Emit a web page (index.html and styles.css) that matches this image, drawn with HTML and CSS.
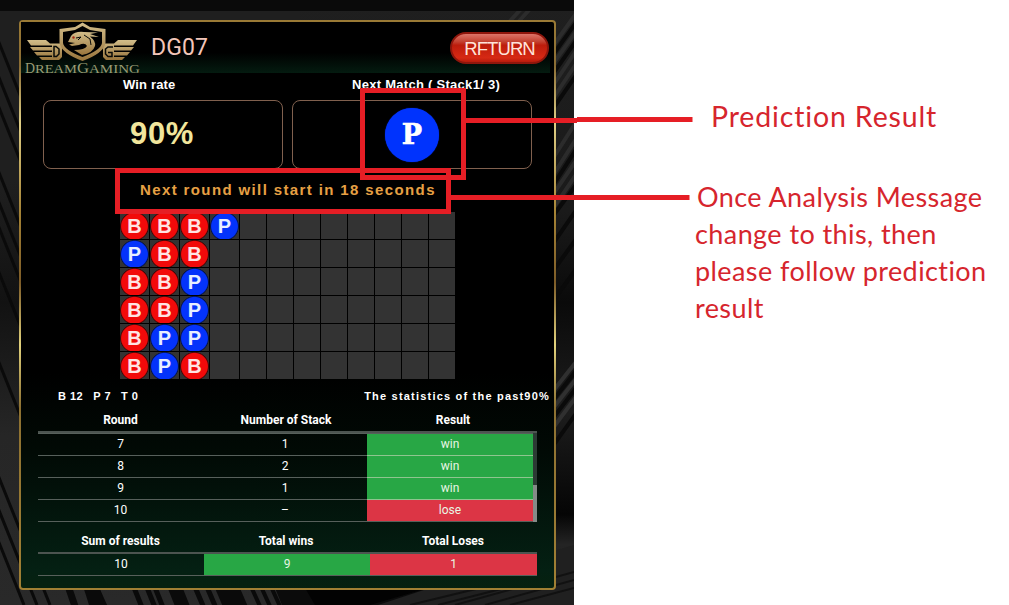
FILE: index.html
```html
<!DOCTYPE html>
<html lang="en">
<head>
<meta charset="utf-8">
<title>DG07</title>
<link rel="stylesheet" href="styles.css">
</head>
<body>
<main class="stage">
  <section class="app">
    <svg class="texture" viewBox="0 0 574 605" aria-hidden="true">
      <defs>
        <linearGradient id="shade" x1="0" y1="0" x2="0" y2="1">
          <stop offset="0" stop-color="#1f1f1f"/><stop offset=".3" stop-color="#1f1f1f"/><stop offset=".5" stop-color="#121212"/><stop offset=".72" stop-color="#262626"/><stop offset="1" stop-color="#292929"/>
        </linearGradient>
        <linearGradient id="shadeR" x1="0" y1="0" x2="0" y2="1">
          <stop offset="0" stop-color="#1f1f1f"/><stop offset=".35" stop-color="#1a1a1a"/><stop offset=".5" stop-color="#0a0a0a"/><stop offset=".68" stop-color="#1d1d1d"/><stop offset=".85" stop-color="#050505"/><stop offset=".9" stop-color="#242424"/><stop offset="1" stop-color="#1e1e1e"/>
        </linearGradient>
      </defs>
      <rect width="300" height="605" fill="url(#shade)"/>
      <rect x="300" width="274" height="605" fill="url(#shadeR)"/>
      <g stroke="#0a0a0a" stroke-width="3" fill="none">
        <path d="M-10 20L30 120M-10 55L30 155M-10 85L30 185M-10 150L30 250M-10 180L30 280"/>
        <path d="M-10 205L30 305M-10 250L30 350M-10 340L30 440M-10 455L50 605M-10 488L37 605M-10 520L24 605"/>
        <path stroke-width="7" d="M66 580L78 615M92 580L110 620"/>
        <path stroke-width="15" d="M89 580L100 615"/>
        <path stroke-width="5" d="M131 580L145 615M144 580L158 615M152 580L166 615"/>
        <path stroke-width="14" d="M172 580L186 615"/>
        <path stroke-width="5" d="M192 580L207 615M204 580L219 615"/>
        <path stroke-width="23" d="M224 580L239 615"/>
        <path stroke-width="4" d="M248 580L264 615M258 580L274 615M268 580L284 615"/>
      </g>
      <path d="M275 588H574V560L372 610H284Z" fill="#0b0b0b"/>
      <path d="M305 588H428L370 605H315Z" fill="#020202"/>
      <path d="M378 605L430 588L574 545V605Z" fill="#202020"/>
      <g stroke="#111" stroke-width="2"><path d="M410 605L480 588M438 605L505 588M455 605L574 572M485 605L574 580M510 605L574 588"/></g>
      <g stroke="#303030" stroke-width="4">
        <path d="M500 32L522 8M509 32L531 8M550 50L590 -6M550 68L590 12M550 90L590 30M550 103L590 43M550 163L590 100M550 180L590 117M550 199L590 140M550 213L590 154" opacity=".8"/>
        <path d="M550 395L590 344M550 412L590 361M550 432L590 378"/>
      </g>
      <g stroke="#0a0a0a" stroke-width="4">
        <path d="M550 59L590 3M550 78L590 21M550 113L590 55M550 190L590 128M550 220L590 166M550 248L590 190M550 275L590 220M550 305L590 250M550 404L590 353M550 422L590 370M550 450L590 394"/>
      </g>
      <rect width="574" height="11" fill="#0a0a0a"/>
    </svg>

    <div class="panel">
      <header class="head">
        <svg class="logo" viewBox="25 22 116 53">
          <defs>
            <linearGradient id="gold" x1="0" y1="0" x2="0" y2="1"><stop offset="0" stop-color="#d2bd8a"/><stop offset="1" stop-color="#99753c"/></linearGradient>
          </defs>
          <g fill="url(#gold)">
            <path d="M27 40H46L50 43.500H62V57L59 60H42L39 57H52V55.500H37L34 52H52V50.500H33L30 47H52V45.500H31Z"/>
            <path d="M137 40H118L114 43.500H103V57L106 60H122L125 57H114V55.500H127L130 52H114V50.500H131L134 47H114V45.500H133Z"/>
            <path fill-rule="evenodd" d="M82.500 22.500L90 27L105.500 29V43Q104 53 82.500 61Q61 53 59.500 43V29L75 27ZM82.500 26L90 30L102 32V43Q101 50 82.500 57Q64 50 63 43V32L75 30Z"/>
            <path d="M68 42L71 36Q75 31 84 32L98 32.500L90 34L99 37L90 36.500Q96 41 95 46Q93 53 82 55L74 50Q85 50 87 46Q85 42 79 45L72 46L69 44.500L75 43Z"/>
          </g>
          <path fill="none" stroke="#090b08" stroke-width="1.500" d="M54 46.500H56L59 49V54L56.500 56.500H54ZM113 47H108L105.500 49V54L108 56.500H112V52.500H108"/>
          <path fill="none" stroke="#090b08" d="M76 38L81 37L78 40M84 35L90 39L91 45"/>
          <circle cx="73.500" cy="37.500" r="1.200" fill="#a32b16"/>
          <g class="wordmark"><text x="25" y="73" font-size="14" textLength="10" lengthAdjust="spacingAndGlyphs">D</text><text x="35" y="73" font-size="11.500" textLength="42" lengthAdjust="spacingAndGlyphs">REAM</text><text x="77" y="73" font-size="14" textLength="12" lengthAdjust="spacingAndGlyphs">G</text><text x="89" y="73" font-size="11.500" textLength="51" lengthAdjust="spacingAndGlyphs">AMING</text></g>
        </svg>
        <h1 class="room">DG07</h1>
        <button class="return">RFTURN</button>
      </header>

      <div class="labels"><span class="lab-rate">Win rate</span><span class="lab-next">Next Match ( Stack1/ 3)</span></div>
      <div class="cards">
        <div class="card rate">90%</div>
        <div class="card"><span class="pick">P</span></div>
      </div>
      <p class="message">Next round will start in 18 seconds</p>

      <div class="road">
        <i class="b">B</i><i class="b">B</i><i class="b">B</i><i class="p">P</i><i></i><i></i><i></i><i></i><i></i><i></i><i></i><i></i>
        <i class="p">P</i><i class="b">B</i><i class="b">B</i><i></i><i></i><i></i><i></i><i></i><i></i><i></i><i></i><i></i>
        <i class="b">B</i><i class="b">B</i><i class="p">P</i><i></i><i></i><i></i><i></i><i></i><i></i><i></i><i></i><i></i>
        <i class="b">B</i><i class="b">B</i><i class="p">P</i><i></i><i></i><i></i><i></i><i></i><i></i><i></i><i></i><i></i>
        <i class="b">B</i><i class="p">P</i><i class="p">P</i><i></i><i></i><i></i><i></i><i></i><i></i><i></i><i></i><i></i>
        <i class="b">B</i><i class="p">P</i><i class="b">B</i><i></i><i></i><i></i><i></i><i></i><i></i><i></i><i></i><i></i>
      </div>

      <div class="stats">
        <div class="counts"><span>B 12</span><span>P 7</span><span>T 0</span></div>
        <span class="past">The statistics of the past90%</span>
      </div>

      <div class="thead"><span>Round</span><span>Number of Stack</span><span>Result</span></div>
      <div class="scroller">
        <div class="rows">
          <div class="row"><span>7</span><span>1</span><span class="win">win</span></div>
          <div class="row"><span>8</span><span>2</span><span class="win">win</span></div>
          <div class="row"><span>9</span><span>1</span><span class="win">win</span></div>
          <div class="row"><span>10</span><span>–</span><span class="lose">lose</span></div>
        </div>
        <div class="track"><div class="thumb"></div></div>
      </div>
      <div class="thead sums"><span>Sum of results</span><span>Total wins</span><span>Total Loses</span></div>
      <div class="row total"><span>10</span><span class="win">9</span><span class="lose">1</span></div>
    </div>
  </section>

  <aside class="notes">
    <p class="note first">Prediction Result</p>
    <p class="note"><span class="l1">Once Analysis Message</span><br><span>change to this, then</span><br><span>please follow prediction</span><br><span>result</span></p>
  </aside>

  <svg class="marks" viewBox="0 0 1009 605" aria-hidden="true">
    <g fill="none" stroke="#e61e25" stroke-width="5">
      <rect x="362.500" y="90.500" width="101" height="87"/>
      <rect x="117.500" y="170.500" width="331" height="41"/>
      <path d="M466 120.500H577M577 119.500H692.500M451 197.500H689.500"/>
    </g>
  </svg>
</main>
</body>
</html>
```
FILE: styles.css
```css
* { box-sizing: border-box; }
body { margin: 0; background: #fff; font-family: "Liberation Sans", Arial, sans-serif; }
.stage { position: relative; display: flex; width: 1009px; height: 605px; overflow: hidden; }
.app { position: relative; flex: none; width: 574px; height: 605px; padding: 20px 18px 15px 19px; background: #141414; }
.texture { position: absolute; inset: 0; width: 574px; height: 605px; }
.panel {
  position: relative; width: 537px; height: 570px; border: 2px solid transparent; border-radius: 4px;
  background:
    linear-gradient(180deg, #000 0, #000 62%, #010a05 76%, #042013 97%, #06210f 100%) padding-box,
    linear-gradient(180deg, #9a7a35 0, #8a6c34 8%, #e0cf86 18%, #a48235 34%, #7d5c28 46%, #e2d27d 57%, #8d7132 68%, #a18034 100%) border-box;
}
.head { display: flex; height: 51px; width: 529px; padding-left: 4px; background: linear-gradient(180deg, #000 60%, #041b10 100%); }
.logo { width: 116px; height: 53px; flex: none; }
.wordmark text { font-family: "Liberation Serif", serif; fill: #9a9b74; }
.room { margin: 12px 0 0 10px; width: 290px; font: 400 23px/28px Roboto, sans-serif; letter-spacing: .1px; color: #f3c6b9; }
.return {
  flex: none; width: 99px; height: 32px; margin: 10px 0 0 9px; padding: 0; border: 2px solid #8e160c; border-radius: 16px;
  background: linear-gradient(180deg, #dc7468 0, #c3402f 28%, #bd1c0c 40%, #d62914 85%, #b71b0c 100%);
  font: 400 18.5px/27px "Liberation Sans", sans-serif; letter-spacing: -.9px; color: #ffe3da;
}
.labels { display: flex; height: 27px; font-weight: 700; font-size: 13px; line-height: 23px; color: #fff; white-space: nowrap; }
.lab-rate { margin-left: 102px; width: 229px; letter-spacing: .15px; }
.lab-next { letter-spacing: .28px; }
.cards { display: flex; gap: 9px; padding-left: 22px; }
.card { display: flex; justify-content: center; align-items: center; width: 240px; height: 69px; border: 1px solid #80604e; border-radius: 8px; }
.rate { font-weight: 700; font-size: 31px; letter-spacing: .6px; color: #f1e69c; padding-bottom: 1px; padding-right: 2px; }
.pick {
  width: 54px; height: 54px; margin-top: 1px; border-radius: 50%; background: #0033fd; color: #fff; text-align: center;
  font: 700 27px/54px "DejaVu Serif", serif; box-shadow: 0 0 1px #0033fd; -webkit-text-stroke: .6px #fff;
}
.message { margin: 0; padding-left: 119px; height: 43px; font-weight: 700; font-size: 15px; line-height: 41px; letter-spacing: 1.38px; color: #e7a044; white-space: nowrap; }
.road { display: grid; grid-template-columns: repeat(3, 29px) 29px repeat(8, 26px); grid-template-rows: repeat(6, 27px); gap: 1px; width: 335px; margin-left: 99px; }
.road i { display: flex; justify-content: center; align-items: center; background: #333; font: 700 20px/27px "Liberation Sans", sans-serif; color: #fff; padding-top: 1px; }
.road .b { background: radial-gradient(circle at 50% 53%, #f20a0a 12.900px, #a4101066 14px, #333 14.700px); color: #ffe3e3; }
.road .p { background: radial-gradient(circle at 50% 53%, #0433fb 12.900px, #0c30b066 14px, #333 14.700px); color: #e8eeff; }
.stats { display: flex; justify-content: space-between; height: 33px; padding: 0 4px 0 37px; font-weight: 700; font-size: 11px; line-height: 35px; letter-spacing: 1.200px; color: #fff; white-space: nowrap; }
.counts { display: flex; gap: 10px; letter-spacing: .5px; }
.thead { display: grid; grid-template-columns: 165px 166px 168px; width: 499px; height: 21px; margin-left: 17px; border-bottom: 2px solid #4c5450; text-align: center; font: 700 12px/16px Roboto, sans-serif; color: #fff; white-space: nowrap; }
.scroller { display: flex; width: 499px; height: 89px; margin-left: 17px; }
.rows { width: 495px; }
.row { display: grid; grid-template-columns: 165px 164px 166px; height: 22px; border-bottom: 1px solid #57605b; text-align: center; font: 400 12px/21px Roboto, sans-serif; color: #fff; }
.rows .row:first-child { height: 23px; border-top: 1px solid #57605b; }
.win { background: #28a745; }
.lose { background: #dc3545; }
.row .win, .row .lose { color: #e9f5e4; }
.rows .win { box-shadow: 0 1px #8fc58f; }
.track { width: 4px; background: #2c3a34; }
.thumb { height: 37px; margin-top: 52px; background: #858b88; }
.sums { margin-top: 11px; line-height: 17px; }
.total { grid-template-columns: 166px 166px 167px; width: 499px; margin-left: 17px; }
.notes { padding: 98px 0 0 121px; width: 435px; color: #d6252d; }
.note { margin: 0; font: 400 27px/37px Lato, sans-serif; font-variant-ligatures: none; letter-spacing: .42px; white-space: nowrap; }
.first { padding-left: 16px; margin-bottom: 43px; font-size: 28.5px; letter-spacing: .85px; }
.l1 { margin-left: 2px; }
.marks { position: absolute; inset: 0; width: 1009px; height: 605px; }
```
